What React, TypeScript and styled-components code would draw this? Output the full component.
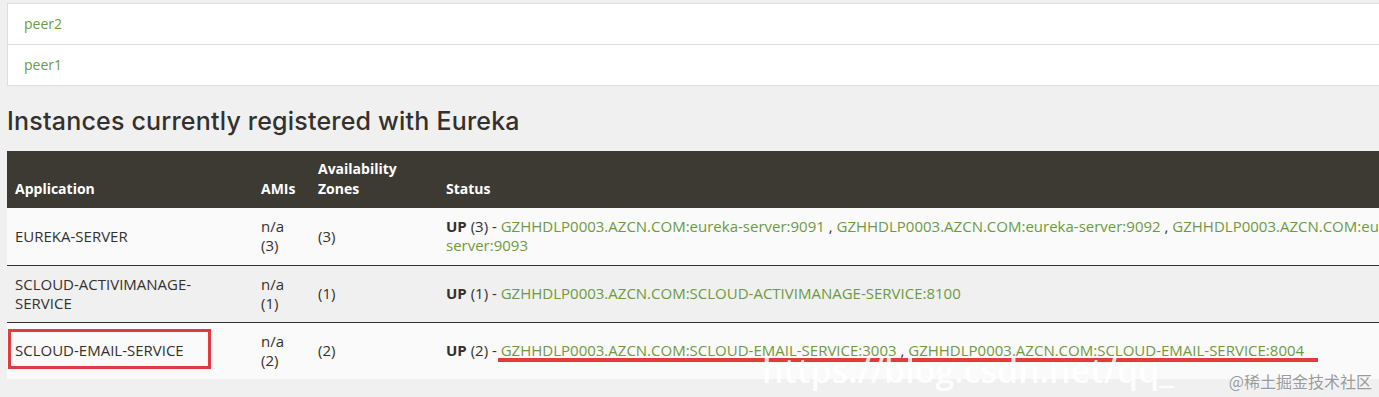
import styled, { createGlobalStyle } from "styled-components";

const GlobalStyle = createGlobalStyle`
    body {
        margin: 0;
        background-color: #f0f0f0;
        overflow: hidden;
        font-family: "Open Sans", "Noto Sans", sans-serif;
        font-size: 15px;
        color: #34302d;
    }
`;

const Page = styled.div`
    padding: 3px 0 0 7px;
    position: relative;
    height: 394px;
    overflow: hidden;
`;

const PeerList = styled.ul`
    list-style: none;
    margin: 0;
    padding: 0;
    background-color: #ffffff;
    border: 1px solid #dddddd;
    border-right: none;
`;

const PeerItem = styled.li`
    height: 40px;
    line-height: 40px;
    padding: 0 16px;
    font-size: 14px;
    & + & {
        border-top: 1px solid #dddddd;
    }
`;

const Link = styled.a`
    color: #6d9a3f;
    text-decoration: none;
`;

const Heading = styled.h2`
    font-family: Inter, "Open Sans", sans-serif;
    font-weight: 500;
    font-size: 25px;
    letter-spacing: 0.2px;
    margin: 20px 0 15px;
    color: #34302d;
`;

const Table = styled.table`
    width: 1440px;
    border-collapse: collapse;
    table-layout: fixed;
`;

const Th = styled.th`
    background-color: #3d3a33;
    color: #ffffff;
    font-size: 14px;
    font-weight: 700;
    text-align: left;
    vertical-align: bottom;
    padding: 8px 8px 9px;
    line-height: 20px;
`;

const HeadRow = styled.tr`
    height: 57px;
`;

const Row = styled.tr<{ $alt?: boolean; $last?: boolean }>`
    background-color: ${p => (p.$alt ? "#f0f0f0" : "#fafafa")};
    border-bottom: ${p => (p.$last ? "none" : "1px solid #34302d")};
    height: 57px;
`;

const Td = styled.td`
    padding: 8px;
    line-height: 19px;
    vertical-align: middle;
    position: relative;
`;

const Strong = styled.b`
    font-weight: 700;
`;

const Marker = styled.span`
    position: absolute;
    left: 1px;
    top: 6px;
    width: 197px;
    height: 34px;
    border: 3px solid #e23a3e;
`;

const Underline = styled.span`
    position: absolute;
    left: 60px;
    top: 35px;
    width: 820px;
    height: 4px;
    background-color: #e23a3e;
`;

const Watermark = styled.div`
    position: absolute;
    right: 7px;
    bottom: 4px;
    font-family: "Noto Sans CJK SC", sans-serif;
    font-size: 16px;
    color: #9a9a9a;
    text-shadow: 0 0 2px #ffffff;
`;

const Ghost = styled.div`
    position: absolute;
    left: 762px;
    top: 347px;
    font-family: "Open Sans", sans-serif;
    font-size: 34px;
    font-weight: 600;
    color: rgba(255, 255, 255, 0.85);
    filter: blur(0.6px);
    white-space: nowrap;
    width: 450px;
    overflow: hidden;
`;

type App = {
    name: string;
    count: number;
    hosts: string[];
};

const host = "GZHHDLP0003.AZCN.COM";

const apps: App[] = [
    {
        name: "EUREKA-SERVER",
        count: 3,
        hosts: [`${host}:eureka-server:9091`, `${host}:eureka-server:9092`, `${host}:eureka-server:9093`],
    },
    {
        name: "SCLOUD-ACTIVIMANAGE-SERVICE",
        count: 1,
        hosts: [`${host}:SCLOUD-ACTIVIMANAGE-SERVICE:8100`],
    },
    {
        name: "SCLOUD-EMAIL-SERVICE",
        count: 2,
        hosts: [`${host}:SCLOUD-EMAIL-SERVICE:3003`, `${host}:SCLOUD-EMAIL-SERVICE:8004`],
    },
];

export default function Dashboard() {
    return <>
        <GlobalStyle/>
        <Page>
            <PeerList>
                <PeerItem><Link href="#">peer2</Link></PeerItem>
                <PeerItem><Link href="#">peer1</Link></PeerItem>
            </PeerList>
            <Heading>Instances currently registered with Eureka</Heading>
            <Table>
                <colgroup>
                    <col style={{width: 246}}/>
                    <col style={{width: 57}}/>
                    <col style={{width: 128}}/>
                    <col/>
                </colgroup>
                <thead>
                <HeadRow>
                    <Th>Application</Th>
                    <Th>AMIs</Th>
                    <Th>Availability Zones</Th>
                    <Th>Status</Th>
                </HeadRow>
                </thead>
                <tbody>
                {apps.map((app, i) => (
                    <Row key={app.name} $alt={i % 2 === 1} $last={i === apps.length - 1}>
                        <Td>
                            {i === 2 && <Marker/>}
                            {app.name}
                        </Td>
                        <Td>n/a<br/>({app.count})</Td>
                        <Td>({app.count})</Td>
                        <Td>
                            {i === 2 && <Underline/>}
                            <Strong>UP</Strong> ({app.count}) - {app.hosts.map((h, j) => (
                            <span key={h}>{j > 0 && " , "}<Link href="#">{h}</Link></span>
                        ))}
                        </Td>
                    </Row>
                ))}
                </tbody>
            </Table>
            <Ghost>https://blog.csdn.net/qq_</Ghost>
            <Watermark>@稀土掘金技术社区</Watermark>
        </Page>
    </>;
}
